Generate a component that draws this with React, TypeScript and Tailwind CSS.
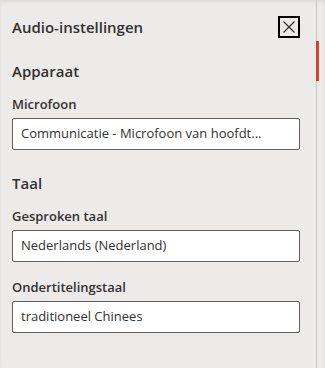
const fields = [
  { label: 'Microfoon', value: 'Communicatie - Microfoon van hoofdt...' },
];

const Select = ({ value }: { value: string }) => (
  <div className="h-[32px] w-[288px] rounded-[2px] border border-[#605e5c] bg-white pl-[8px] pr-2 flex items-center text-[13px] text-[#323130] whitespace-nowrap overflow-hidden">
    {value}
  </div>
);

export default function App() {
  return (
    <div
      className="w-[325px] h-[368px] flex bg-[#edebe9] shadow-[inset_0_2px_3px_rgba(0,0,0,0.07)] text-[#323130]"
      style={{ fontFamily: '"Open Sans", "Noto Sans", sans-serif' }}
    >
      <div className="w-[316px] pl-[12px]">
        {/* header */}
        <div className="mt-[16px] h-[22px] flex items-center justify-between pr-[16px]">
          <h1 className="text-[15px] font-semibold leading-[22px]">Audio-instellingen</h1>
          <button className="w-[22px] h-[22px] border-2 border-black flex items-center justify-center">
            <svg width="12" height="12" viewBox="0 0 12 12">
              <path d="M0.5 0.5L11.5 11.5M11.5 0.5L0.5 11.5" stroke="#323130" strokeWidth="1.2" />
            </svg>
          </button>
        </div>

        <h2 className="mt-[22px] text-[15px] font-semibold leading-[22px]">Apparaat</h2>
        {fields.map((f) => (
          <div key={f.label} className="mt-[12px]">
            <div className="text-[13px] font-semibold leading-[20px] mb-1">{f.label}</div>
            <Select value={f.value} />
          </div>
        ))}

        <h2 className="mt-[22px] text-[15px] font-semibold leading-[22px]">Taal</h2>
        <div className="mt-[12px]">
          <div className="text-[13px] font-semibold leading-[20px] mb-1">Gesproken taal</div>
          <Select value="Nederlands (Nederland)" />
        </div>
        <div className="mt-[15px]">
          <div className="text-[13px] font-semibold leading-[20px] mb-1">Ondertitelingstaal</div>
          <Select value="traditioneel Chinees" />
        </div>
      </div>

      {/* scrollbar */}
      <div className="flex-1 border-l border-[#c8c6c4]">
        <div className="-ml-px w-[3px] mt-[41px] h-[40px] bg-[#d7432b]" />
      </div>
    </div>
  );
}
